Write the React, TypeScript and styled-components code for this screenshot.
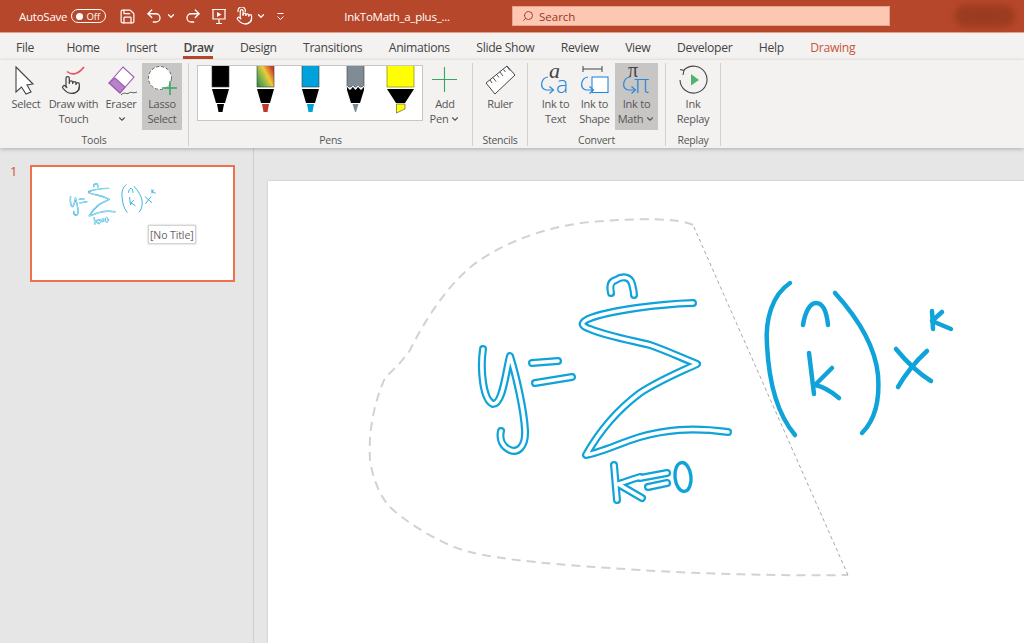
import React, { FC, ReactNode } from "react";
import styled, { createGlobalStyle } from "styled-components";
import { ChevronDown, Pointer, Redo2, Save, Search, Undo2 } from "lucide-react";

const GlobalStyle = createGlobalStyle`
  html, body {
    margin: 0;
    padding: 0;
    background: #e6e6e6;
  }
  body {
    font-family: "Open Sans", "Noto Sans", "Liberation Sans", sans-serif;
  }
`;

const INK = "#0fa3d9";
const GREEN = "#33a863";

const Page = styled.div`
  width: 1024px;
  height: 643px;
  display: flex;
  flex-direction: column;
  overflow: hidden;
  color: #444;
`;

const TitleBar = styled.header`
  height: 32px;
  flex: none;
  display: grid;
  grid-template-columns: 512px 378px 1fr;
  align-items: center;
  background: #b7472a;
  border-bottom: 1px solid #e0a08c;
  color: #fff;
  font-size: 11.5px;
`;

const QuickAccess = styled.div`
  display: flex;
  align-items: center;
  padding-left: 19px;
`;

const QuickText = styled.span`
  letter-spacing: -0.25px;
`;

const Toggle = styled.div`
  width: 35px;
  height: 14px;
  margin-left: 4px;
  box-sizing: border-box;
  border: 1px solid #fff;
  border-radius: 8px;
  display: flex;
  align-items: center;
  justify-content: space-between;
  padding: 0 5px 0 4px;
  font-size: 9.5px;
`;

const ToggleDot = styled.i`
  width: 7px;
  height: 7px;
  border-radius: 50%;
  background: #fff;
`;

const QuickIcon = styled.span<{ $ml: number }>`
  display: inline-flex;
  margin-left: ${(p) => p.$ml}px;
  color: #fff;
`;

const DocTitle = styled(QuickText)`
  margin-left: 59px;
`;

const SearchBox = styled.div`
  height: 20px;
  box-sizing: border-box;
  border: 1px solid #e8a48d;
  background: #fdc7b3;
  color: #933a22;
  display: flex;
  align-items: center;
  gap: 5px;
  padding-left: 9px;
  font-size: 11.5px;
`;

const SearchIcon = styled(Search)`
  transform: scaleX(-1);
`;

const Account = styled.div`
  width: 60px;
  height: 22px;
  margin-left: 65px;
  border-radius: 11px;
  background: #9c3b20;
  filter: blur(3px);
`;

const TabRow = styled.nav`
  height: 27px;
  flex: none;
  display: flex;
  align-items: flex-start;
  gap: 26.5px;
  padding: 6px 0 0 16px;
  box-sizing: border-box;
  background: #f3f2f1;
  font-size: 12.2px;
  letter-spacing: -0.33px;
`;

const Tab = styled.span<{ $active?: boolean; $accent?: boolean; $first?: boolean }>`
  height: 20px;
  line-height: 18px;
  box-sizing: border-box;
  margin-right: ${(p) => (p.$first ? 6 : 0)}px;
  color: ${(p) => (p.$accent ? "#c8553d" : "#444")};
  font-weight: ${(p) => (p.$active ? 600 : 400)};
  border-bottom: ${(p) => (p.$active ? "3px solid #b7472a" : "none")};
`;

const Ribbon = styled.section`
  height: 88px;
  flex: none;
  display: flex;
  align-items: flex-start;
  padding-top: 3px;
  box-sizing: border-box;
  background: #f3f2f1;
  box-shadow: 0 1px 4px rgba(0, 0, 0, 0.25);
  position: relative;
  z-index: 1;
`;

const Group = styled.div<{ $w: number; $pl: number }>`
  width: ${(p) => p.$w}px;
  height: 83px;
  box-sizing: border-box;
  padding-left: ${(p) => p.$pl}px;
  border-right: 1px solid #d2d0ce;
  display: flex;
  flex-direction: column;
`;

const GroupBody = styled.div<{ $gap?: number }>`
  height: 67px;
  flex: none;
  display: flex;
  gap: ${(p) => p.$gap ?? 0}px;
`;

const GroupLabel = styled.div<{ $pl: number }>`
  margin-left: -${(p) => p.$pl}px;
  padding-top: 4px;
  line-height: 13px;
  text-align: center;
  font-size: 10.5px;
  letter-spacing: -0.25px;
  color: #555;
`;

const ToolButton = styled.div<{ $w: number; $active?: boolean; $ml?: number }>`
  width: ${(p) => p.$w}px;
  margin-left: ${(p) => p.$ml ?? 0}px;
  flex: none;
  display: flex;
  flex-direction: column;
  align-items: center;
  padding-top: 2px;
  box-sizing: border-box;
  background: ${(p) => (p.$active ? "#c8c6c4" : "transparent")};
`;

const GlyphSvg = styled.svg`
  display: block;
  flex: none;
`;

const ToolLabel = styled.div`
  text-align: center;
  font-size: 11px;
  line-height: 15px;
  letter-spacing: -0.25px;
  white-space: nowrap;
  color: #555;
`;

const LabelChevron = styled(ChevronDown)`
  vertical-align: -1px;
  margin-left: 2px;
`;

const PenTray = styled.div`
  width: 226px;
  height: 56px;
  margin-top: 2px;
  box-sizing: border-box;
  border: 1px solid #c8c6c4;
  background: #fff;
  display: flex;
`;

const Workspace = styled.main`
  flex: 1;
  min-height: 0;
  display: flex;
  background: #e6e6e6;
`;

const ThumbPane = styled.aside`
  width: 254px;
  flex: none;
  box-sizing: border-box;
  border-right: 1px solid #cfcfcf;
  padding: 17px 0 0 10px;
  display: flex;
  gap: 14px;
  align-items: flex-start;
`;

const SlideNumber = styled.span`
  width: 6px;
  font-size: 13px;
  line-height: 12px;
  color: #d0512f;
`;

const Thumb = styled.div`
  position: relative;
  width: 205px;
  height: 117px;
  box-sizing: border-box;
  border: 2px solid #f0704e;
  background: #fff;
`;

const InkSvg = styled.svg`
  display: block;
  width: 100%;
  height: 100%;
`;

const TitleTip = styled.div`
  position: absolute;
  left: 116px;
  top: 58px;
  padding: 0 1px;
  height: 19px;
  line-height: 18px;
  box-sizing: border-box;
  background: #fff;
  border: 1px solid #d4d4d4;
  box-shadow: 0 0 2px rgba(0, 0, 0, 0.25);
  font-size: 10.5px;
  letter-spacing: -0.1px;
  color: #666;
  white-space: nowrap;
`;

const Stage = styled.div`
  flex: 1;
  min-width: 0;
  padding: 33px 0 0 14px;
`;

const Slide = styled.div`
  height: 100%;
  background: #fff;
  box-shadow: 0 0 2px rgba(0, 0, 0, 0.2);
`;

// glyphs are drawn in page coordinates, so left here is where the box starts
const Glyph: FC<{ left: number; w: number; children: ReactNode }> = ({ left, w, children }) => (
  <GlyphSvg width={w} height={31} viewBox={`${left} 65 ${w} 31`} fill="none">
    {children}
  </GlyphSvg>
);

const Hook: FC<{ dx: number }> = ({ dx }) => (
  <g transform={`translate(${dx} 0)`} stroke="#2b88d8" strokeWidth="1.2" fill="none">
    <path d="M548 77C541 78 539 88 546 90L553 90" />
    <path d="M549.5 86.5L553.5 90L549.5 93.5" />
  </g>
);

const tools = {
  select: (
    <Glyph left={8} w={36}>
      <path
        d="M16 67L33 84L27 85L31 92L26 94L21.5 87L16 92Z"
        fill="#fff"
        stroke="#444"
        strokeWidth="1.1"
      />
    </Glyph>
  ),
  touch: (
    <Glyph left={47} w={53}>
      <path d="M67 71.5C72 75.5 78 74.5 84 67" stroke="#e8505b" strokeWidth="1.6" />
      <Pointer x={61} y={75} width={20} height={20} stroke="#444" strokeWidth={1.5} />
    </Glyph>
  ),
  eraser: (
    <Glyph left={103} w={36}>
      <path d="M109 83L123 67L134 77L120 93Z" fill="#fff" stroke="#9a5bb0" strokeWidth="1.1" />
      <path d="M109 83L115 78L125 87L120 93Z" fill="#b783c8" stroke="#9a5bb0" strokeWidth="1.1" />
      <path d="M121 95C125 91 126 95 129 93C131 91 132 94 137 92" stroke="#444" strokeWidth="0.9" />
    </Glyph>
  ),
  lasso: (
    <Glyph left={142} w={40}>
      <circle cx="160" cy="78" r="11.5" fill="#fff" stroke="#666" strokeWidth="1" strokeDasharray="3 2" />
      <path d="M170 81V95M162 88H177" stroke={GREEN} strokeWidth="1.5" />
    </Glyph>
  ),
  add: (
    <Glyph left={429} w={32}>
      <path d="M444.5 67V92M432 79.5H457" stroke={GREEN} strokeWidth="1.1" />
    </Glyph>
  ),
  ruler: (
    <Glyph left={480} w={40}>
      <path d="M486 83L507 66L515 75L495 94Z" fill="#fff" stroke="#444" strokeWidth="1" />
      <path
        d="M490 80L492 83M493 77.5L496 81.5M497 75L499 77.5M500 72L503 76M503.5 69.5L505.5 72M507 66.5L510 70.5"
        stroke="#444"
        strokeWidth="0.9"
      />
    </Glyph>
  ),
  text: (
    <Glyph left={537} w={37}>
      <text x="549" y="78" fontFamily="Liberation Serif" fontStyle="italic" fontSize="22" fill="#444">
        a
      </text>
      <Hook dx={0} />
      <text x="556" y="93" fontFamily="Open Sans" fontWeight="300" fontSize="23" fill="#2b88d8">
        a
      </text>
    </Glyph>
  ),
  shape: (
    <Glyph left={576} w={37}>
      <path d="M583 69H602M583 66V72M602 66V72" stroke="#444" strokeWidth="1" />
      <rect x="592" y="77" width="16" height="15.5" fill="#fff" stroke="#2b88d8" strokeWidth="1.1" />
      <Hook dx={40} />
    </Glyph>
  ),
  math: (
    <Glyph left={615} w={43}>
      <text x="628" y="77" fontFamily="Liberation Serif" fontSize="20" fill="#444">
        π
      </text>
      <Hook dx={82} />
      <text x="634" y="93" fontFamily="Open Sans" fontWeight="300" fontSize="25" fill="#2b88d8">
        π
      </text>
    </Glyph>
  ),
  replay: (
    <Glyph left={672} w={42}>
      <path d="M684 70A13.5 13.5 0 1 1 680 80" stroke="#444" strokeWidth="1.1" />
      <path d="M680 69.5L684 70.5L683 75" stroke="#444" strokeWidth="1.1" />
      <path d="M691 74L699 80L691 85.5Z" fill="#4fb56d" />
    </Glyph>
  ),
};

// one tray slot, x 0..44 with the pen's centre on 22.5
const PenBarrel: FC<{ fill: string; narrow?: boolean }> = ({ fill, narrow }) => (
  <rect
    x={narrow ? 14 : 9}
    y="-1"
    width={narrow ? 17 : 27}
    height="22"
    fill={fill}
    stroke={narrow ? "#3d3d3d" : "#6f6f00"}
    strokeWidth="0.6"
  />
);

const PenTip: FC<{ nib: string }> = ({ nib }) => (
  <>
    <path d="M14 23H31L27 37H18Z" fill="#000" />
    <path d="M19 38H26L24.5 46H20.5Z" fill={nib} />
  </>
);

const pens: ReactNode[] = [
  <>
    <PenBarrel fill="#000" narrow />
    <PenTip nib="#000" />
  </>,
  <>
    <PenBarrel fill="url(#rainbow)" narrow />
    <PenTip nib="#c0392b" />
  </>,
  <>
    <PenBarrel fill="#00a2db" narrow />
    <PenTip nib="#00a2db" />
  </>,
  <>
    <PenBarrel fill="#7f8c94" narrow />
    <path d="M14 21L17 24L20 21L22.5 24L25 21L28 24L31 21V24L27 37H18L14 24Z" fill="#000" />
    <path d="M14 20L17 23L20 20L22.5 23L25 20L28 23L31 20" stroke="#fff" strokeWidth="0.9" fill="none" />
    <path d="M19.5 38H25.5L23 46H22Z" fill="#7f8c94" />
  </>,
  <>
    <PenBarrel fill="#ffff00" />
    <path d="M9 23H36L27 37H18Z" fill="#000" />
    <path d="M18.5 38H27V43L18.5 47Z" fill="#ffff00" stroke="#444" strokeWidth="0.6" />
  </>,
];

const Pen: FC<{ children: ReactNode; defs?: boolean }> = ({ children, defs }) => (
  <GlyphSvg width={45} height={54} viewBox="0 0 45 54">
    {defs && (
      <defs>
        <linearGradient id="rainbow" x1="0" y1="1" x2="1" y2="0.3">
          <stop offset="0%" stopColor="#1f8a4c" />
          <stop offset="40%" stopColor="#8fb84a" />
          <stop offset="65%" stopColor="#f0c93a" />
          <stop offset="100%" stopColor="#c8402a" />
        </linearGradient>
      </defs>
    )}
    {children}
  </GlyphSvg>
);

const tubeStrokes = [
  "M483 349C480 370 483 400 493 404C503 404 506 370 510 356C516 375 524 410 525 430C526 448 517 453 510 450C503 447 499 440 501 431",
  "M532 363L558 361",
  "M535 383L572 377",
  "M693 303C660 304 610 310 588 319C580 323 581 326 590 329C610 337 635 341 650 345C665 350 682 358 697 364C680 372 660 380 640 393C620 408 600 430 586 455C600 453 620 443 640 437C665 430 690 427 728 432",
  "M611 293C609 284 612 281 616 280C622 276 630 276 632 284C633 288 634 291 634 295",
  "M614 465L617 500",
  "M640 477C629 480 623 483 618 484L642 498",
  "M640 478L667 473",
  "M648 487L667 483",
];

const solidStrokes = [
  "M790 283C772 295 765 320 767 345C769 385 778 415 795 435",
  "M835 293C855 315 875 345 878 375C880 400 875 420 862 433",
  "M803 325C805 312 810 303 816 303C824 303 827 315 828 325",
  "M809 353L814 394",
  "M832 368L815 385C825 387 832 392 839 398",
  "M896 349C905 360 918 373 931 381",
  "M927 351C915 362 905 375 898 387",
  "M932 311L933 329",
  "M942 312L932 321L951 329",
];

const InkStrokes: FC = () => (
  <g fill="none" strokeLinecap="round" strokeLinejoin="round">
    {tubeStrokes.map((d) => (
      <path key={d} d={d} stroke={INK} strokeWidth="8" />
    ))}
    {tubeStrokes.map((d) => (
      <path key={d} d={d} stroke="#fff" strokeWidth="3.6" />
    ))}
    <ellipse cx="683" cy="477" rx="8" ry="14.5" stroke={INK} strokeWidth="3.4" transform="rotate(-6 683 477)" />
    {solidStrokes.map((d) => (
      <path key={d} d={d} stroke={INK} strokeWidth="4.5" />
    ))}
  </g>
);

const LassoOutline: FC = () => (
  <g fill="none">
    <path
      d="M693 225C680 218 640 218 590 222C550 226 510 240 480 260C450 280 425 320 410 350C400 365 390 372 385 378C375 400 368 430 370 460C373 480 380 495 388 505C400 518 440 545 470 552C500 560 560 565 640 570C700 574 790 576 848 575"
      stroke="#d2d2d2"
      strokeWidth="2"
      strokeDasharray="9 6"
    />
    <path d="M848 575L693 225" stroke="#a8a8a8" strokeWidth="1" strokeDasharray="3.5 3" />
  </g>
);

const tabs = [
  "File",
  "Home",
  "Insert",
  "Draw",
  "Design",
  "Transitions",
  "Animations",
  "Slide Show",
  "Review",
  "View",
  "Developer",
  "Help",
];

export default function App() {
  return (
    <Page>
      <GlobalStyle />
      <TitleBar>
        <QuickAccess>
          <QuickText>AutoSave</QuickText>
          <Toggle>
            <ToggleDot />
            Off
          </Toggle>
          <QuickIcon $ml={13}>
            <Save size={17} strokeWidth={1.7} />
          </QuickIcon>
          <QuickIcon $ml={9}>
            <Undo2 size={18} strokeWidth={1.7} />
          </QuickIcon>
          <QuickIcon $ml={3}>
            <ChevronDown size={10} strokeWidth={3} />
          </QuickIcon>
          <QuickIcon $ml={8}>
            <Redo2 size={18} strokeWidth={1.7} />
          </QuickIcon>
          <QuickIcon $ml={8}>
            <svg width="18" height="17" viewBox="0 0 18 17" fill="none" stroke="currentColor" strokeWidth="1.2">
              <path d="M2 1.5H16M3 1.5V11H15V1.5M9 11V15M6 15.5H12" />
              <path d="M7 4L11.5 6.5L7 9Z" fill="currentColor" stroke="none" />
            </svg>
          </QuickIcon>
          <QuickIcon $ml={8}>
            <svg width="17" height="18" viewBox="0 0 24 24" fill="none" stroke="currentColor" strokeWidth="1.7">
              <Pointer x={0} y={1} width={24} height={24} strokeWidth={1.7} />
              <path d="M3.2 6.5A5.2 5.2 0 1 1 12.8 6.5" />
            </svg>
          </QuickIcon>
          <QuickIcon $ml={3}>
            <ChevronDown size={10} strokeWidth={3} />
          </QuickIcon>
          <QuickIcon $ml={10}>
            <svg width="9" height="9" viewBox="0 0 9 9" fill="none" stroke="currentColor" strokeWidth="1">
              <path d="M1.5 1.5H7.5M1.5 4.5L4.5 7.5L7.5 4.5" />
            </svg>
          </QuickIcon>
          <DocTitle>InkToMath_a_plus_...</DocTitle>
        </QuickAccess>
        <SearchBox>
          <SearchIcon size={12} strokeWidth={1.8} />
          Search
        </SearchBox>
        <Account />
      </TitleBar>

      <TabRow>
        {tabs.map((t) => (
          <Tab key={t} $active={t === "Draw"} $first={t === "File"}>
            {t}
          </Tab>
        ))}
        <Tab $accent>Drawing</Tab>
      </TabRow>

      <Ribbon>
        <Group $w={189} $pl={8}>
          <GroupBody $gap={3}>
            <ToolButton $w={36}>
              {tools.select}
              <ToolLabel>Select</ToolLabel>
            </ToolButton>
            <ToolButton $w={53}>
              {tools.touch}
              <ToolLabel>
                Draw with
                <br />
                Touch
              </ToolLabel>
            </ToolButton>
            <ToolButton $w={36}>
              {tools.eraser}
              <ToolLabel>
                Eraser
                <br />
                <LabelChevron size={10} strokeWidth={2.6} />
              </ToolLabel>
            </ToolButton>
            <ToolButton $w={40} $active>
              {tools.lasso}
              <ToolLabel>
                Lasso
                <br />
                Select
              </ToolLabel>
            </ToolButton>
          </GroupBody>
          <GroupLabel $pl={8}>Tools</GroupLabel>
        </Group>

        <Group $w={284} $pl={8}>
          <GroupBody>
            <PenTray>
              {pens.map((pen, i) => (
                <Pen key={i} defs={i === 1}>
                  {pen}
                </Pen>
              ))}
            </PenTray>
            <ToolButton $w={32} $ml={6}>
              {tools.add}
              <ToolLabel>
                Add
                <br />
                Pen
                <LabelChevron size={10} strokeWidth={2.6} />
              </ToolLabel>
            </ToolButton>
          </GroupBody>
          <GroupLabel $pl={8}>Pens</GroupLabel>
        </Group>

        <Group $w={55} $pl={7}>
          <GroupBody>
            <ToolButton $w={40}>
              {tools.ruler}
              <ToolLabel>Ruler</ToolLabel>
            </ToolButton>
          </GroupBody>
          <GroupLabel $pl={7}>Stencils</GroupLabel>
        </Group>

        <Group $w={138} $pl={9}>
          <GroupBody $gap={2}>
            <ToolButton $w={37}>
              {tools.text}
              <ToolLabel>
                Ink to
                <br />
                Text
              </ToolLabel>
            </ToolButton>
            <ToolButton $w={37}>
              {tools.shape}
              <ToolLabel>
                Ink to
                <br />
                Shape
              </ToolLabel>
            </ToolButton>
            <ToolButton $w={43} $active>
              {tools.math}
              <ToolLabel>
                Ink to
                <br />
                Math
                <LabelChevron size={10} strokeWidth={2.6} />
              </ToolLabel>
            </ToolButton>
          </GroupBody>
          <GroupLabel $pl={9}>Convert</GroupLabel>
        </Group>

        <Group $w={55} $pl={6}>
          <GroupBody>
            <ToolButton $w={42}>
              {tools.replay}
              <ToolLabel>
                Ink
                <br />
                Replay
              </ToolLabel>
            </ToolButton>
          </GroupBody>
          <GroupLabel $pl={6}>Replay</GroupLabel>
        </Group>
      </Ribbon>

      <Workspace>
        <ThumbPane>
          <SlideNumber>1</SlideNumber>
          <Thumb>
            <InkSvg viewBox="270 185 1110 624" preserveAspectRatio="none">
              <InkStrokes />
            </InkSvg>
            <TitleTip>[No Title]</TitleTip>
          </Thumb>
        </ThumbPane>
        <Stage>
          <Slide>
            <InkSvg viewBox="268 181 756 462">
              <LassoOutline />
              <InkStrokes />
            </InkSvg>
          </Slide>
        </Stage>
      </Workspace>
    </Page>
  );
}
